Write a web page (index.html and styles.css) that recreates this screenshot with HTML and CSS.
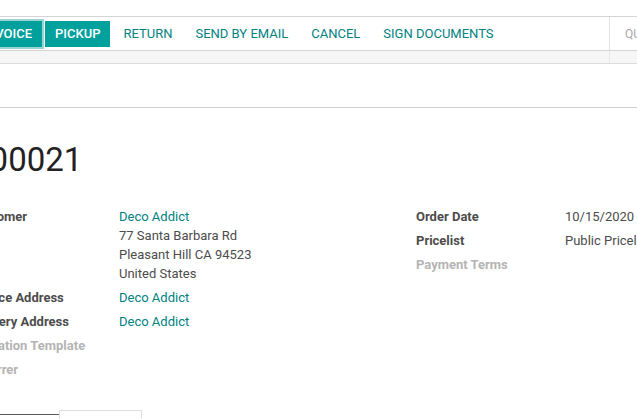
FILE: index.html
```html
<!DOCTYPE html>
<html lang="en">
<head>
<meta charset="utf-8">
<title>S00021</title>
<link rel="stylesheet" href="styles.css">
</head>
<body>
<div class="page">
  <div class="top"></div>
  <div class="statusbar">
    <div class="buttons">
      <div class="first-slot"><button class="btn btn-primary focused">Create Invoice</button></div>
      <button class="btn btn-primary">Pickup</button>
      <button class="btn">Return</button>
      <button class="btn">Send by Email</button>
      <button class="btn">Cancel</button>
      <button class="btn">Sign Documents</button>
    </div>
    <div class="status">
      <span class="step">Quotation</span>
      <span class="step">Quotation Sent</span>
      <span class="step">Sales Order</span>
    </div>
  </div>
  <div class="band"><div class="band-left"></div><div class="band-right"></div></div>
  <div class="spacer"></div>
  <div class="sheet">
    <h1 class="title">S00021</h1>
    <div class="groups">
      <div class="group">
        <div class="label">Customer</div>
        <div class="value">
          <a class="link" href="#">Deco Addict</a>
          <div>77 Santa Barbara Rd</div>
          <div>Pleasant Hill CA 94523</div>
          <div>United States</div>
        </div>
        <div class="label">Invoice Address</div>
        <div class="value"><a class="link" href="#">Deco Addict</a></div>
        <div class="label">Delivery Address</div>
        <div class="value"><a class="link" href="#">Deco Addict</a></div>
        <div class="label empty">Quotation Template</div>
        <div class="value"></div>
        <div class="label empty">Referrer</div>
        <div class="value"></div>
      </div>
      <div class="group">
        <div class="label">Order Date</div>
        <div class="value">10/15/2020</div>
        <div class="label">Pricelist</div>
        <div class="value">Public Pricelist (USD)</div>
        <div class="label empty">Payment Terms</div>
        <div class="value"></div>
      </div>
    </div>
    <div class="tabs">
      <div class="tab active">Order Lines</div>
      <div class="tab">Other Info</div>
    </div>
  </div>
</div>
</body>
</html>
```

FILE: styles.css
```css
html, body {
  margin: 0;
  padding: 0;
  background: #fff;
  overflow: hidden;
}

body {
  font-family: Roboto, "Liberation Sans", Arial, sans-serif;
  font-size: 13px;
  color: #4c4c4c;
}

.page {
  width: 637px;
  height: 419px;
  overflow: hidden;
}

.top {
  height: 16px;
}

.statusbar {
  display: grid;
  grid-template-columns: 609px minmax(0, 1fr);
  height: 33px;
  border-top: 1px solid #d4d4d4;
  border-bottom: 1px solid #d4d4d4;
  white-space: nowrap;
}

.buttons {
  display: flex;
  align-items: center;
  gap: 3px;
}

.first-slot {
  width: 42px;
  flex: 0 0 42px;
  display: flex;
  justify-content: flex-end;
}

.btn {
  height: 26px;
  padding: 0 10px;
  border: none;
  background: none;
  color: #00827f;
  font-family: Roboto, "Liberation Sans", Arial, sans-serif;
  font-size: 13px;
  text-transform: uppercase;
  white-space: nowrap;
  display: flex;
  align-items: center;
  flex: 0 0 auto;
}

.btn-primary {
  background: #00a09d;
  color: #fff;
  font-weight: 500;
}

.focused {
  box-shadow: 0 0 0 2px #9ad3d2;
}

.status {
  display: flex;
  align-items: center;
  gap: 24px;
  overflow: hidden;
  border-left: 1px solid #e0e0e0;
  padding-left: 15px;
  color: #a8a8a8;
  font-size: 12px;
  text-transform: uppercase;
}

.step {
  flex: 0 0 auto;
}

.band {
  display: grid;
  grid-template-columns: 609px minmax(0, 1fr);
  height: 12px;
  background: #f6f6f6;
  border-bottom: 1px solid #dcdcdc;
}

.band-right {
  border-left: 1px solid #e8e8e8;
}

.spacer {
  height: 43px;
  border-bottom: 1px solid #cfcfcf;
}

.sheet {
  width: 892px;
  margin-left: -30px;
  padding-top: 33px;
}

.title {
  margin: 0;
  font-size: 33px;
  line-height: 38px;
  font-weight: 400;
  color: #222;
}

.groups {
  display: grid;
  grid-template-columns: 446px 446px;
  margin-top: 28px;
}

.group {
  display: grid;
  grid-template-columns: 149px 1fr;
  align-content: start;
}

.label,
.value {
  line-height: 19px;
  padding-bottom: 5px;
  white-space: nowrap;
}

.label {
  font-weight: 700;
  color: #4c4c4c;
}

.label.empty {
  color: #b4b4b4;
}

.link {
  color: #00827f;
  text-decoration: none;
  display: block;
}

.tabs {
  display: flex;
  align-items: flex-start;
  margin-top: 26px;
  height: 40px;
}

.tab {
  font-size: 13px;
  line-height: 19px;
  padding-top: 12px;
  text-align: center;
  color: #4c4c4c;
  white-space: nowrap;
  overflow: hidden;
  box-sizing: border-box;
}

.tab.active {
  width: 89px;
  margin-top: 4px;
  height: 36px;
  border-top: 1px solid #5c5866;
  padding-top: 8px;
}

.tab:not(.active) {
  width: 83px;
  height: 40px;
  border: 1px solid #dedede;
  border-bottom: none;
}
```
